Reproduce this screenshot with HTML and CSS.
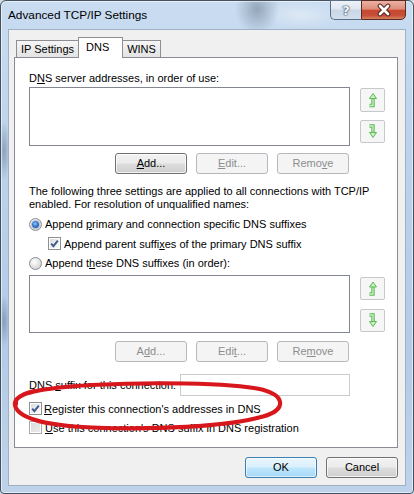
FILE: index.html
```html
<!DOCTYPE html>
<html>
<head>
<meta charset="utf-8">
<title>Advanced TCP/IP Settings</title>
<link rel="stylesheet" href="styles.css">
</head>
<body>
<div class="window">
  <div class="titlebar">
    <span class="title">Advanced TCP/IP Settings</span>
    <div class="caption-btns">
      <div class="cap-help"><span>?</span></div>
      <div class="cap-close">
        <svg width="20" height="14" viewBox="0 0 20 14"><path d="M6 3 L14 11 M14 3 L6 11" stroke="#5a2720" stroke-width="4.6" stroke-linecap="round"/><path d="M6 3 L14 11 M14 3 L6 11" stroke="#ffffff" stroke-width="2.6" stroke-linecap="round"/></svg>
      </div>
    </div>
  </div>
  <div class="client">
    <div class="tabs">
      <div class="tab tab-ip">IP Settings</div>
      <div class="tab tab-dns active">DNS</div>
      <div class="tab tab-wins">WINS</div>
    </div>
    <div class="panel">
      <div class="label first">D<u>N</u>S server addresses, in order of use:</div>
      <div class="list-row">
        <div class="listbox"></div>
        <div class="arrows">
          <div class="arrow-btn tall">
            <svg width="23" height="22" viewBox="0 0 23 22"><path d="M8.5 16.5 H12 V9" fill="none" stroke="#5fb85a" stroke-width="3.4" stroke-linejoin="miter"/><path d="M8.5 16.5 H12 V9" fill="none" stroke="#c6f2bc" stroke-width="1.3"/><path d="M12 4.5 L15.5 9.5 H8.5 Z" fill="#c6f2bc" stroke="#5fb85a" stroke-width="1"/></svg>
          </div>
          <div class="arrow-btn">
            <svg width="23" height="21" viewBox="0 0 23 21"><path d="M8.5 5 H12 V12" fill="none" stroke="#5fb85a" stroke-width="3.4" stroke-linejoin="miter"/><path d="M8.5 5 H12 V12" fill="none" stroke="#c6f2bc" stroke-width="1.3"/><path d="M12 16.5 L15.5 11.5 H8.5 Z" fill="#c6f2bc" stroke="#5fb85a" stroke-width="1"/></svg>
          </div>
        </div>
      </div>
      <div class="btn-row">
        <div class="btn"><span><u>A</u>dd...</span></div>
        <div class="btn disabled"><span><u>E</u>dit...</span></div>
        <div class="btn disabled"><span>Remo<u>v</u>e</span></div>
      </div>
      <p class="note">The following three settings are applied to all connections with TCP/IP<br>enabled. For resolution of unqualified names:</p>
      <div class="opt h20"><span class="radio on"></span><span class="txt">Append <u>p</u>rimary and connection specific DNS suffixes</span></div>
      <div class="opt h19 sub"><span class="check on"><svg width="11" height="11" viewBox="0 0 11 11"><path d="M2.2 5.6 L4.4 8.2 L8.8 2.6" fill="none" stroke="#3e5b8e" stroke-width="1.9"/></svg></span><span class="txt">Append parent suffi<u>x</u>es of the primary DNS suffix</span></div>
      <div class="opt h20"><span class="radio"></span><span class="txt">Append t<u>h</u>ese DNS suffixes (in order):</span></div>
      <div class="list-row second">
        <div class="listbox short"></div>
        <div class="arrows second">
          <div class="arrow-btn">
            <svg width="23" height="21" viewBox="0 0 23 21"><path d="M8.5 16 H12 V8.5" fill="none" stroke="#5fb85a" stroke-width="3.4" stroke-linejoin="miter"/><path d="M8.5 16 H12 V8.5" fill="none" stroke="#c6f2bc" stroke-width="1.3"/><path d="M12 4 L15.5 9 H8.5 Z" fill="#c6f2bc" stroke="#5fb85a" stroke-width="1"/></svg>
          </div>
          <div class="arrow-btn">
            <svg width="23" height="21" viewBox="0 0 23 21"><path d="M8.5 5 H12 V12" fill="none" stroke="#5fb85a" stroke-width="3.4" stroke-linejoin="miter"/><path d="M8.5 5 H12 V12" fill="none" stroke="#c6f2bc" stroke-width="1.3"/><path d="M12 16.5 L15.5 11.5 H8.5 Z" fill="#c6f2bc" stroke="#5fb85a" stroke-width="1"/></svg>
          </div>
        </div>
      </div>
      <div class="btn-row second">
        <div class="btn disabled"><span>A<u>d</u>d...</span></div>
        <div class="btn disabled"><span>Edi<u>t</u>...</span></div>
        <div class="btn disabled"><span>Re<u>m</u>ove</span></div>
      </div>
      <div class="suffix-row">
        <span>DNS <u>s</u>uffix for this connection:</span>
        <div class="textbox"></div>
      </div>
      <div class="opt h19 reg"><span class="check on"><svg width="11" height="11" viewBox="0 0 11 11"><path d="M2.2 5.6 L4.4 8.2 L8.8 2.6" fill="none" stroke="#3e5b8e" stroke-width="1.9"/></svg></span><span class="txt"><u>R</u>egister this connection's addresses in DNS</span></div>
      <div class="opt h19"><span class="check off"></span><span class="txt"><u>U</u>se this connection's DNS suffix in DNS registration</span></div>
    </div>
    <div class="dlg-btns">
      <div class="btn default"><span>OK</span></div>
      <div class="btn"><span>Cancel</span></div>
    </div>
  </div>
  <svg class="annotation" width="414" height="494" viewBox="0 0 414 494">
    <path d="M16 404 C13 393 42 388 92 385 C150 382 228 382.5 262 389.5 C286 396 286 410 263 416.5 C226 427 152 430 92 427.5 C42 425.5 17 417 15 405 C14 399 22 394 34 391" fill="none" stroke="#d8171d" stroke-width="4.2" stroke-linecap="round"/>
  </svg>
</div>
</body>
</html>
```

FILE: styles.css
```css
* { box-sizing: border-box; }
html, body { margin: 0; padding: 0; }
body {
  width: 414px;
  height: 494px;
  overflow: hidden;
  background: #cfdcea;
  font-family: "Liberation Sans", Arial, sans-serif;
  font-size: 11px;
  color: #000;
}
u { text-decoration: underline; text-underline-offset: 1px; text-decoration-thickness: 1px; }

.window {
  position: relative;
  width: 414px;
  height: 494px;
  display: flex;
  flex-direction: column;
  border: 1px solid #45515f;
  border-radius: 6px 6px 4px 4px;
  background:
    radial-gradient(ellipse 22px 26px at 256px 8px, rgba(105,122,140,0.55), rgba(105,122,140,0) 100%),
    radial-gradient(ellipse 40px 14px at 300px 14px, rgba(230,238,246,0.7), rgba(230,238,246,0) 100%),
    radial-gradient(ellipse 6px 30px at 3px 150px, rgba(80,100,130,0.45), rgba(80,100,130,0) 100%),
    radial-gradient(ellipse 6px 26px at 3px 320px, rgba(80,100,130,0.45), rgba(80,100,130,0) 100%),
    linear-gradient(180deg, #c9dcf1 0%, #bcd3ec 30%, #b3cbe7 70%, #bed3ea 100%);
  box-shadow: inset 0 0 0 1px rgba(255,255,255,0.55);
}

.titlebar {
  height: 28px;
  display: flex;
  justify-content: space-between;
  align-items: flex-start;
}
.title {
  padding-left: 7px;
  line-height: 28px;
  font-size: 11.8px;
  color: #000;
}
.caption-btns {
  display: flex;
  margin-top: -1px;
  margin-right: 7px;
}
.cap-help {
  width: 31px;
  height: 20px;
  border: 1px solid #5b6e87;
  border-right: none;
  border-radius: 0 0 0 5px;
  background: linear-gradient(180deg, #edf2f8 0%, #dfe7f1 45%, #c9d6e6 50%, #d3dfec 100%);
  display: flex;
  align-items: center;
  justify-content: center;
}
.cap-help span {
  font-family: "DejaVu Sans", sans-serif;
  font-weight: bold;
  font-size: 13px;
  line-height: 1;
  color: #f4f7fb;
  text-shadow: 0 0 1px #2f3f55, 0 0 1px #2f3f55, 0 0 2px #56677e;
}
.cap-close {
  width: 45px;
  height: 20px;
  border: 1px solid #5a2a24;
  border-radius: 0 0 5px 0;
  background: linear-gradient(180deg, #eab1a3 0%, #de8d79 45%, #c8472f 52%, #c55039 80%, #d9805e 100%);
  display: flex;
  align-items: center;
  justify-content: center;
}

.client {
  flex: 1;
  margin: 0 7px 7px 7px;
  border: 1px solid #9fb0c5;
  background: #f0f0f0;
  display: flex;
  flex-direction: column;
}

.tabs {
  position: relative;
  z-index: 1;
  display: flex;
  align-items: flex-end;
  height: 27px;
  padding: 7px 0 0 7px;
}
.tab {
  height: 17px;
  border: 1px solid #8c8e94;
  border-bottom: none;
  background: linear-gradient(180deg, #f6f6f6 0%, #ececec 50%, #e3e3e3 100%);
  line-height: 16px;
  text-align: center;
}
.tab-ip { width: 63px; }
.tab-dns {
  width: 45px;
  margin-left: -1px;
}
.tab-wins { width: 39px; margin-left: -1px; }
.tab.active {
  height: 21px;
  margin-bottom: -1px;
  background: #fff;
  text-align: left;
  padding-left: 7px;
  line-height: 18px;
  position: relative;
  z-index: 2;
}

.panel {
  height: 391px;
  margin: 0 7px 0 5px;
  border: 1px solid #898c95;
  background: #fff;
  padding: 0 0 0 14px;
}
.label.first {
  margin-top: 13px;
  line-height: 14px;
}
.list-row {
  display: flex;
  margin-top: 2px;
}
.listbox {
  width: 321px;
  height: 59px;
  border: 1px solid #828790;
  background: #fff;
}
.listbox.short { height: 58px; }
.arrows {
  margin-left: 10px;
  padding-top: 1px;
  display: flex;
  flex-direction: column;
  gap: 8px;
}
.arrows.second { padding-top: 2px; gap: 9px; }
.arrow-btn {
  width: 25px;
  height: 23px;
  border: 1px solid #c5c8cc;
  border-radius: 2px;
  background: #f6f6f6;
  display: flex;
  align-items: center;
  justify-content: center;
}
.arrow-btn.tall { height: 24px; }

.btn-row {
  width: 320px;
  margin-top: 7px;
  display: flex;
  justify-content: flex-end;
  gap: 9px;
}
.btn-row.second { margin-top: 8px; }
.btn {
  width: 72px;
  height: 21px;
  border: 1px solid #707070;
  border-radius: 3px;
  background: linear-gradient(180deg, #f2f2f2 0%, #ebebeb 48%, #dddddd 52%, #cfcfcf 100%);
  box-shadow: inset 0 0 0 1px rgba(255,255,255,0.75);
  display: flex;
  align-items: center;
  justify-content: center;
  line-height: 13px;
}
.btn.disabled {
  border-color: #b5b9bd;
  background: #f4f4f4;
  box-shadow: none;
  color: #8d8d8d;
}
.btn.default {
  border-color: #3c7fb1;
  background: linear-gradient(180deg, #eaf6fd 0%, #d9f0fc 48%, #bee6fd 52%, #a7d9f5 100%);
  box-shadow: inset 0 0 0 1px rgba(255,255,255,0.6);
}

.note {
  margin: 11px 0 0 0;
  line-height: 13px;
}
.opt {
  display: flex;
  align-items: center;
}
.opt.h20 { height: 20px; }
.opt.h19 { height: 19px; }
.note + .opt { margin-top: 3px; }
.opt.sub { padding-left: 19px; }

.radio {
  width: 13px;
  height: 13px;
  border-radius: 50%;
  border: 1px solid #8a8d92;
  background: radial-gradient(circle at 40% 35%, #ffffff 0%, #e6e6e6 45%, #c9c9c9 100%);
  margin-right: 3px;
  position: relative;
  flex: none;
}
.radio.on::after {
  content: "";
  position: absolute;
  left: 2px;
  top: 2px;
  width: 7px;
  height: 7px;
  border-radius: 50%;
  background: radial-gradient(circle at 45% 40%, #9cd0ff 0%, #3d7fd0 40%, #1b4a8e 100%);
  box-shadow: 0 0 0 1px rgba(120,160,210,0.5);
}
.check {
  width: 13px;
  height: 13px;
  border: 1px solid #8e8f8f;
  background: linear-gradient(135deg, #d6d8dc 0%, #f4f4f4 70%, #ffffff 100%);
  box-shadow: inset 0 0 0 1px #fff;
  margin-right: 3px;
  display: flex;
  align-items: center;
  justify-content: center;
  flex: none;
}
.check.off {
  background: linear-gradient(135deg, #d9dadc 0%, #ececec 100%);
  border-color: #a8a9aa;
}
.opt.reg .check { margin-right: 2px; }

.list-row.second { margin-top: 2px; }

.suffix-row {
  width: 321px;
  margin-top: 12px;
  height: 22px;
  display: flex;
  justify-content: space-between;
  align-items: center;
}
.textbox {
  width: 170px;
  height: 22px;
  border: 1px solid #c8cbd0;
  background: #fff;
}
.suffix-row + .opt { margin-top: 3px; }

.dlg-btns {
  display: flex;
  justify-content: flex-end;
  gap: 9px;
  margin-top: 9px;
  padding-right: 7px;
}

.annotation {
  position: absolute;
  left: -1px;
  top: -1px;
  pointer-events: none;
}
```
